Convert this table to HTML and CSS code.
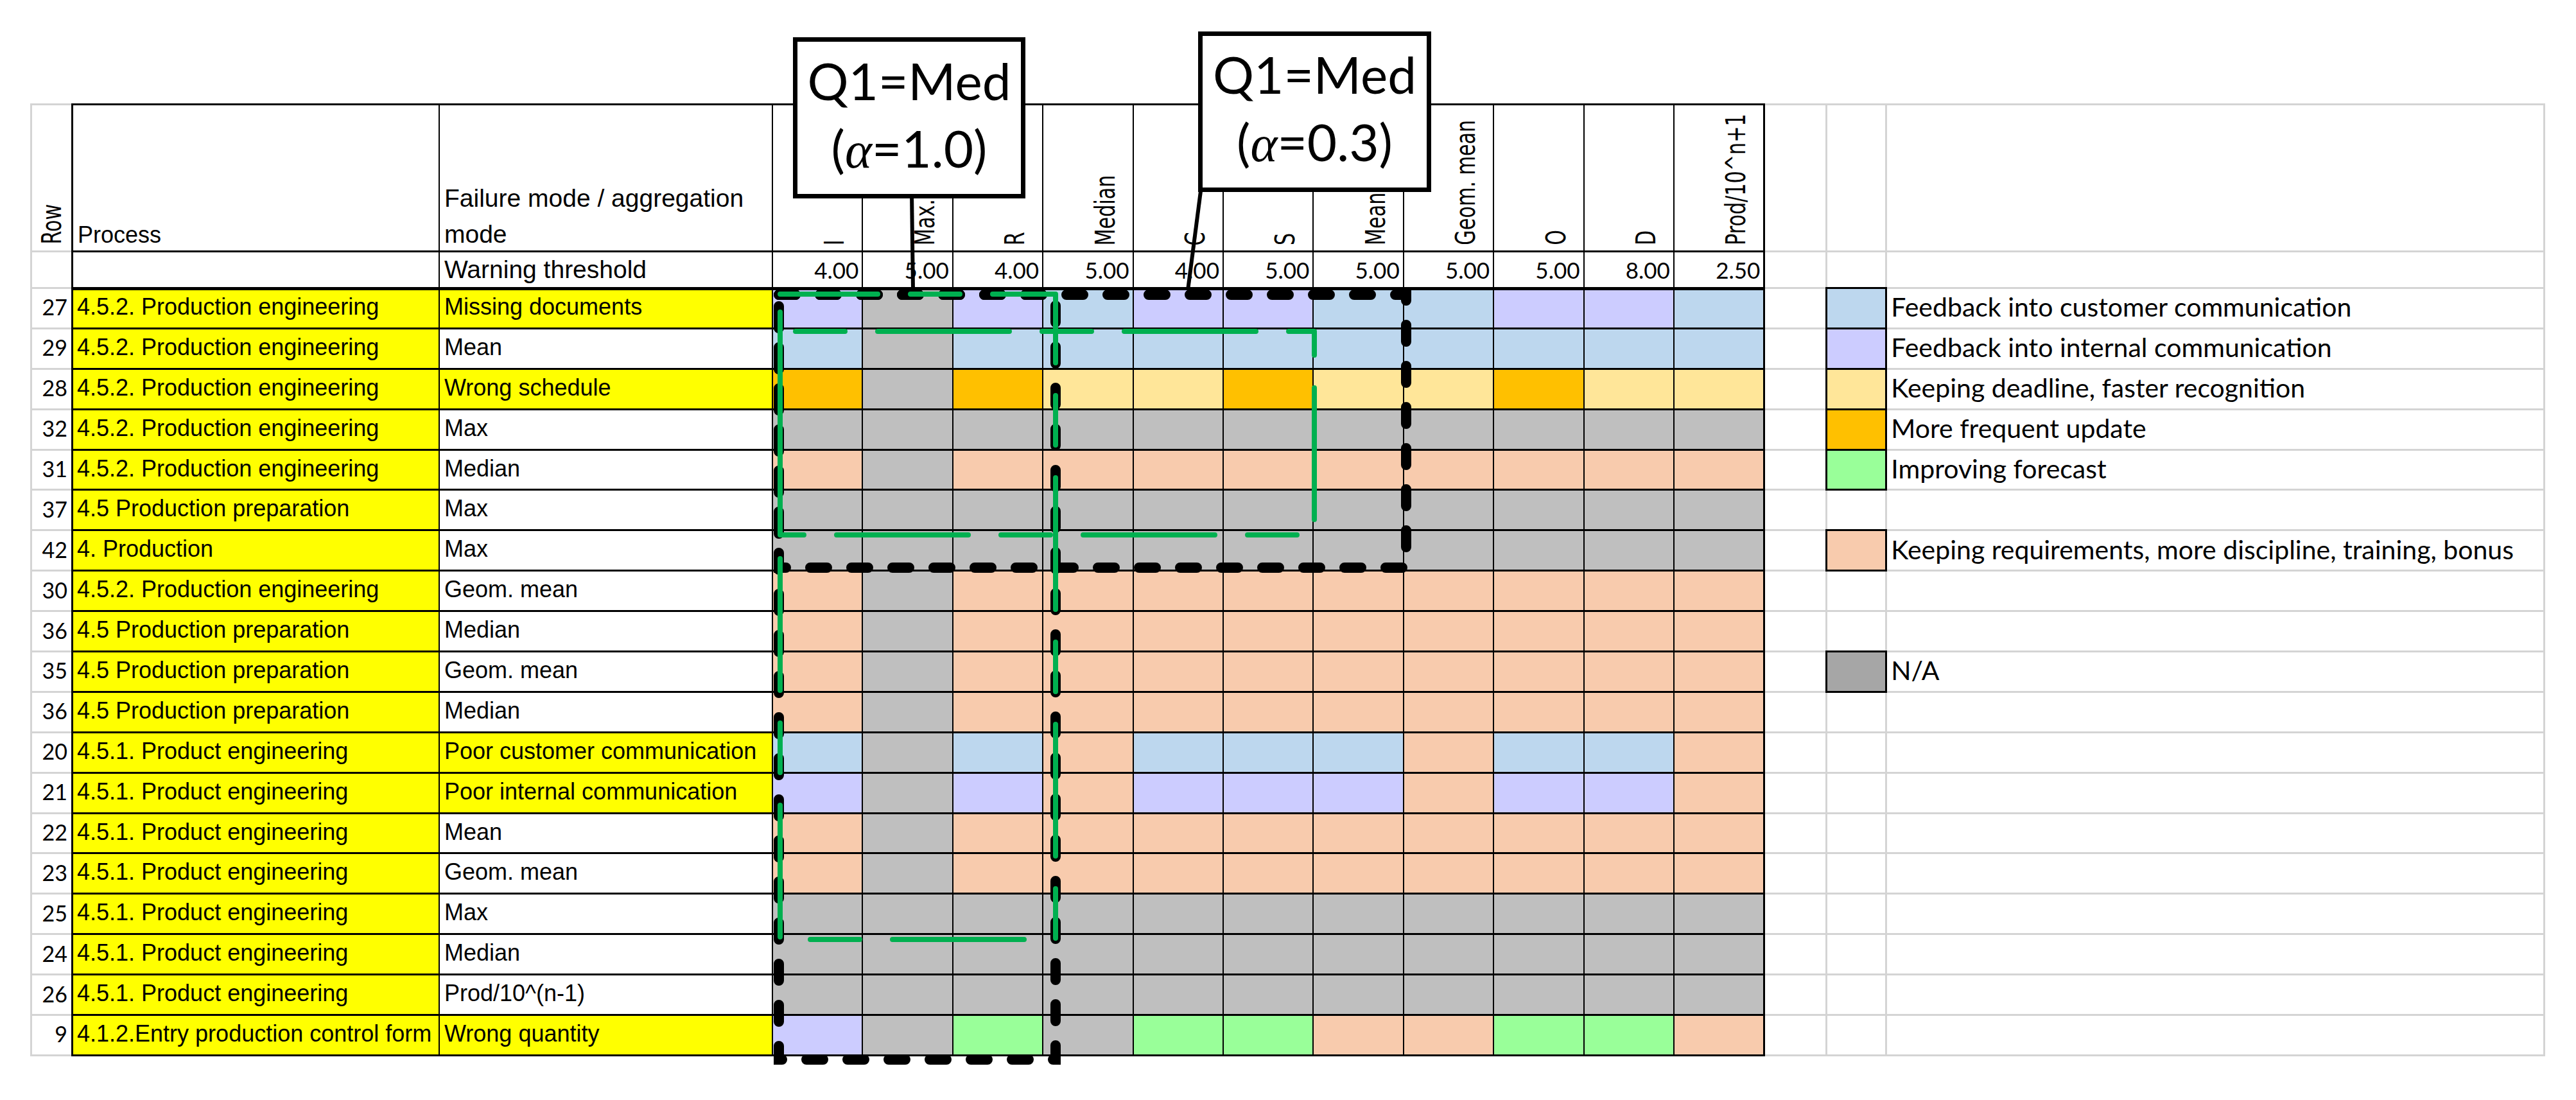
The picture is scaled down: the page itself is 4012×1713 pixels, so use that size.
FILE: index.html
```html
<!DOCTYPE html>
<html>
<head>
<meta charset="utf-8">
<title>Aggregation table</title>
<link rel="stylesheet" href="styles.css">
</head>
<body>
<div class="sheet">
  <div class="grid rows">
    <div class="rh"><span class="rot">Row</span></div>
    <div></div>
    <div class="rn">27</div>
    <div class="rn">29</div>
    <div class="rn">28</div>
    <div class="rn">32</div>
    <div class="rn">31</div>
    <div class="rn">37</div>
    <div class="rn">42</div>
    <div class="rn">30</div>
    <div class="rn">36</div>
    <div class="rn">35</div>
    <div class="rn">36</div>
    <div class="rn">20</div>
    <div class="rn">21</div>
    <div class="rn">22</div>
    <div class="rn">23</div>
    <div class="rn">25</div>
    <div class="rn">24</div>
    <div class="rn">26</div>
    <div class="rn">9</div>
  </div>

  <div class="grid main">
    <div class="hp"><div>Process</div></div>
    <div class="hf"><div>Failure mode / aggregation mode</div></div>
    <div class="vh"><span class="rot">I</span></div>
    <div class="vh"><span class="rot">Max.</span></div>
    <div class="vh"><span class="rot">R</span></div>
    <div class="vh"><span class="rot">Median</span></div>
    <div class="vh"><span class="rot">C</span></div>
    <div class="vh"><span class="rot">S</span></div>
    <div class="vh"><span class="rot">Mean</span></div>
    <div class="vh"><span class="rot">Geom. mean</span></div>
    <div class="vh"><span class="rot">O</span></div>
    <div class="vh"><span class="rot">D</span></div>
    <div class="vh"><span class="rot">Prod/10^n+1</span></div>

    <div></div>
    <div class="tl">Warning threshold</div>
    <div class="n">4.00</div><div class="n">5.00</div><div class="n">4.00</div><div class="n">5.00</div><div class="n">4.00</div><div class="n">5.00</div><div class="n">5.00</div><div class="n">5.00</div><div class="n">5.00</div><div class="n">8.00</div><div class="n">2.50</div>

    <!-- 27 -->
    <div class="p y t">4.5.2. Production engineering</div><div class="f y t">Missing documents</div>
    <div class="t lv"></div><div class="t gy"></div><div class="t lv"></div><div class="t bl"></div><div class="t lv"></div><div class="t lv"></div><div class="t bl"></div><div class="t bl"></div><div class="t lv"></div><div class="t lv"></div><div class="t bl"></div>
    <!-- 29 -->
    <div class="p y">4.5.2. Production engineering</div><div class="f">Mean</div>
    <div class="bl"></div><div class="gy"></div><div class="bl"></div><div class="bl"></div><div class="bl"></div><div class="bl"></div><div class="bl"></div><div class="bl"></div><div class="bl"></div><div class="bl"></div><div class="bl"></div>
    <!-- 28 -->
    <div class="p y">4.5.2. Production engineering</div><div class="f y">Wrong schedule</div>
    <div class="or"></div><div class="gy"></div><div class="or"></div><div class="ly"></div><div class="ly"></div><div class="or"></div><div class="ly"></div><div class="ly"></div><div class="or"></div><div class="ly"></div><div class="ly"></div>
    <!-- 32 -->
    <div class="p y">4.5.2. Production engineering</div><div class="f">Max</div>
    <div class="gy"></div><div class="gy"></div><div class="gy"></div><div class="gy"></div><div class="gy"></div><div class="gy"></div><div class="gy"></div><div class="gy"></div><div class="gy"></div><div class="gy"></div><div class="gy"></div>
    <!-- 31 -->
    <div class="p y">4.5.2. Production engineering</div><div class="f">Median</div>
    <div class="pc"></div><div class="gy"></div><div class="pc"></div><div class="pc"></div><div class="pc"></div><div class="pc"></div><div class="pc"></div><div class="pc"></div><div class="pc"></div><div class="pc"></div><div class="pc"></div>
    <!-- 37 -->
    <div class="p y">4.5 Production preparation</div><div class="f">Max</div>
    <div class="gy"></div><div class="gy"></div><div class="gy"></div><div class="gy"></div><div class="gy"></div><div class="gy"></div><div class="gy"></div><div class="gy"></div><div class="gy"></div><div class="gy"></div><div class="gy"></div>
    <!-- 42 -->
    <div class="p y">4. Production</div><div class="f">Max</div>
    <div class="gy"></div><div class="gy"></div><div class="gy"></div><div class="gy"></div><div class="gy"></div><div class="gy"></div><div class="gy"></div><div class="gy"></div><div class="gy"></div><div class="gy"></div><div class="gy"></div>
    <!-- 30 -->
    <div class="p y">4.5.2. Production engineering</div><div class="f">Geom. mean</div>
    <div class="pc"></div><div class="gy"></div><div class="pc"></div><div class="pc"></div><div class="pc"></div><div class="pc"></div><div class="pc"></div><div class="pc"></div><div class="pc"></div><div class="pc"></div><div class="pc"></div>
    <!-- 36 -->
    <div class="p y">4.5 Production preparation</div><div class="f">Median</div>
    <div class="pc"></div><div class="gy"></div><div class="pc"></div><div class="pc"></div><div class="pc"></div><div class="pc"></div><div class="pc"></div><div class="pc"></div><div class="pc"></div><div class="pc"></div><div class="pc"></div>
    <!-- 35 -->
    <div class="p y">4.5 Production preparation</div><div class="f">Geom. mean</div>
    <div class="pc"></div><div class="gy"></div><div class="pc"></div><div class="pc"></div><div class="pc"></div><div class="pc"></div><div class="pc"></div><div class="pc"></div><div class="pc"></div><div class="pc"></div><div class="pc"></div>
    <!-- 36 -->
    <div class="p y">4.5 Production preparation</div><div class="f">Median</div>
    <div class="pc"></div><div class="gy"></div><div class="pc"></div><div class="pc"></div><div class="pc"></div><div class="pc"></div><div class="pc"></div><div class="pc"></div><div class="pc"></div><div class="pc"></div><div class="pc"></div>
    <!-- 20 -->
    <div class="p y">4.5.1. Product engineering</div><div class="f y">Poor customer communication</div>
    <div class="bl"></div><div class="gy"></div><div class="bl"></div><div class="pc"></div><div class="bl"></div><div class="bl"></div><div class="bl"></div><div class="pc"></div><div class="bl"></div><div class="bl"></div><div class="pc"></div>
    <!-- 21 -->
    <div class="p y">4.5.1. Product engineering</div><div class="f y">Poor internal communication</div>
    <div class="lv"></div><div class="gy"></div><div class="lv"></div><div class="pc"></div><div class="lv"></div><div class="lv"></div><div class="lv"></div><div class="pc"></div><div class="lv"></div><div class="lv"></div><div class="pc"></div>
    <!-- 22 -->
    <div class="p y">4.5.1. Product engineering</div><div class="f">Mean</div>
    <div class="pc"></div><div class="gy"></div><div class="pc"></div><div class="pc"></div><div class="pc"></div><div class="pc"></div><div class="pc"></div><div class="pc"></div><div class="pc"></div><div class="pc"></div><div class="pc"></div>
    <!-- 23 -->
    <div class="p y">4.5.1. Product engineering</div><div class="f">Geom. mean</div>
    <div class="pc"></div><div class="gy"></div><div class="pc"></div><div class="pc"></div><div class="pc"></div><div class="pc"></div><div class="pc"></div><div class="pc"></div><div class="pc"></div><div class="pc"></div><div class="pc"></div>
    <!-- 25 -->
    <div class="p y">4.5.1. Product engineering</div><div class="f">Max</div>
    <div class="gy"></div><div class="gy"></div><div class="gy"></div><div class="gy"></div><div class="gy"></div><div class="gy"></div><div class="gy"></div><div class="gy"></div><div class="gy"></div><div class="gy"></div><div class="gy"></div>
    <!-- 24 -->
    <div class="p y">4.5.1. Product engineering</div><div class="f">Median</div>
    <div class="gy"></div><div class="gy"></div><div class="gy"></div><div class="gy"></div><div class="gy"></div><div class="gy"></div><div class="gy"></div><div class="gy"></div><div class="gy"></div><div class="gy"></div><div class="gy"></div>
    <!-- 26 -->
    <div class="p y">4.5.1. Product engineering</div><div class="f">Prod/10^(n-1)</div>
    <div class="gy"></div><div class="gy"></div><div class="gy"></div><div class="gy"></div><div class="gy"></div><div class="gy"></div><div class="gy"></div><div class="gy"></div><div class="gy"></div><div class="gy"></div><div class="gy"></div>
    <!-- 9 -->
    <div class="p y">4.1.2.Entry production control form</div><div class="f y">Wrong quantity</div>
    <div class="lv"></div><div class="gy"></div><div class="gn"></div><div class="gy"></div><div class="gn"></div><div class="gn"></div><div class="pc"></div><div class="pc"></div><div class="gn"></div><div class="gn"></div><div class="pc"></div>
  </div>

  <div class="grid legend">
    <div></div><div></div><div></div>
    <div></div><div></div><div></div>
    <div></div><div class="sw bl"></div><div class="lt">Feedback into customer communication</div>
    <div></div><div class="sw lv"></div><div class="lt">Feedback into internal communication</div>
    <div></div><div class="sw ly"></div><div class="lt">Keeping deadline, faster recognition</div>
    <div></div><div class="sw or"></div><div class="lt">More frequent update</div>
    <div></div><div class="sw gn"></div><div class="lt">Improving forecast</div>
    <div></div><div></div><div></div>
    <div></div><div class="sw pc"></div><div class="lt">Keeping requirements, more discipline, training, bonus</div>
    <div></div><div></div><div></div>
    <div></div><div></div><div></div>
    <div></div><div class="sw na"></div><div class="lt">N/A</div>
    <div></div><div></div><div></div>
    <div></div><div></div><div></div>
    <div></div><div></div><div></div>
    <div></div><div></div><div></div>
    <div></div><div></div><div></div>
    <div></div><div></div><div></div>
    <div></div><div></div><div></div>
    <div></div><div></div><div></div>
    <div></div><div></div><div></div>
  </div>
</div>

<svg class="overlay" width="4012" height="1713" viewBox="0 0 4012 1713">
  <g fill="none" stroke="#000" stroke-width="6">
    <line x1="1420" y1="300" x2="1422" y2="452"/>
    <line x1="1871" y1="290" x2="1850" y2="452"/>
  </g>
  <g fill="none" stroke="#000" stroke-width="16" stroke-linecap="round" stroke-dasharray="26 38">
    <path d="M1213 459 H2190 V884 H1213 Z"/>
    <path d="M1213 459 H1644 V1650 H1213 Z"/>
  </g>
  <g fill="none" stroke="#00b050" stroke-width="8" stroke-linecap="round" stroke-linejoin="round" stroke-dasharray="205 51 77 51">
    <path d="M1215 458 H1644 V1463 H1215 Z" stroke-dashoffset="53"/>
    <path d="M1215 516 H2047 V833 H1215 Z" stroke-dashoffset="232"/>
  </g>
</svg>

<div class="callout c1">Q1=Med<br>(<span class="al">α</span>=1.0)</div>
<div class="callout c2">Q1=Med<br>(<span class="al">α</span>=0.3)</div>
</body>
</html>
```

FILE: styles.css
```css
* { box-sizing: border-box; margin: 0; padding: 0; }
html, body { background: #fff; }
body {
  width: 4012px;
  height: 1713px;
  position: relative;
  overflow: hidden;
  font-family: "Liberation Sans", Arial, sans-serif;
  color: #000;
}

.sheet {
  display: flex;
  align-items: flex-start;
  padding: 161px 0 0 47px;
}

.grid {
  display: grid;
  grid-template-rows: 226px 54px repeat(19, 59.9px);
  row-gap: 3px;
  padding-top: 3px;
  padding-bottom: 3px;
}
.grid > div {
  background: #fff;
  display: flex;
  align-items: center;
  white-space: nowrap;
  min-width: 0;
}

.rows {
  background: #d4d4d4;
  padding-left: 3px;
  grid-template-columns: 61px;
}
.main {
  background: #000;
  padding-left: 3px;
  padding-right: 3px;
  column-gap: 2px;
  grid-template-columns: 569px 517px repeat(11, 138.4px);
}
.legend {
  background: #d4d4d4;
  padding-right: 3px;
  column-gap: 3px;
  grid-template-columns: 94px 90px 1022px;
}

/* row numbers */
.rn {
  justify-content: flex-end;
  padding: 0 6px 4px 0;
  font-family: Lato, "Open Sans", sans-serif;
  font-size: 34px;
}
.grid > .rh {
  justify-content: flex-end;
  align-items: flex-end;
  padding: 0 9px 10px 0;
}

/* header */
.grid > .hp, .grid > .hf {
  align-items: flex-end;
  padding-left: 7px;
}
.hp > div {
  font-size: 36px;
  line-height: 56px;
  margin-bottom: -4px;
}
.grid > .hf { white-space: normal; }
.hf > div {
  font-size: 39px;
  line-height: 56px;
  margin-bottom: -3px;
}
.grid > .vh {
  justify-content: flex-end;
  align-items: flex-end;
  padding: 0 21px 8px 0;
}
.rot {
  display: block;
  writing-mode: vertical-rl;
  font-family: "DejaVu Sans Condensed", "DejaVu Sans", sans-serif;
  font-stretch: condensed;
  font-size: 42px;
  line-height: 42px;
  white-space: nowrap;
  transform-origin: 50% 100%;
  transform: scaleY(0.8) translateY(-100%) rotate(180deg);
}

/* threshold row */
.tl {
  padding-left: 7px;
  font-size: 39px;
}
.grid > .n {
  justify-content: flex-end;
  padding-right: 5px;
  font-family: Lato, "Open Sans", sans-serif;
  font-size: 35px;
}

/* data cells */
.p, .f {
  padding: 0 0 4px 6px;
  font-size: 36px;
}
.f { padding-left: 7px; }
.main > .t { box-shadow: inset 0 2px 0 #000; }

.grid > .y  { background: #ffff00; }
.grid > .bl { background: #bdd7ee; }
.grid > .lv { background: #ccccff; }
.grid > .ly { background: #ffe699; }
.grid > .or { background: #ffc000; }
.grid > .gy { background: #bfbfbf; }
.grid > .pc { background: #f8cbad; }
.grid > .gn { background: #99ff99; }
.grid > .na { background: #a6a6a6; }

/* legend */
.sw { outline: 3px solid #000; }
.lt {
  padding: 0 0 4px 6px;
  font-family: Lato, "Open Sans", sans-serif;
  font-size: 41px;
}

/* overlays */
.overlay {
  position: absolute;
  left: 0;
  top: 0;
  pointer-events: none;
}
.callout {
  position: absolute;
  background: #fff;
  border: 7px solid #000;
  text-align: center;
  font-family: Lato, "Open Sans", sans-serif;
  font-size: 80px;
  line-height: 105px;
  white-space: nowrap;
}
.c1 { left: 1235px; top: 58px; width: 362px; height: 251px; padding-top: 8px; }
.c2 { left: 1866px; top: 49px; width: 363px; height: 250px; padding-top: 7px; }
.al { font-family: "Liberation Serif", "DejaVu Serif", serif; font-style: italic; }
```
